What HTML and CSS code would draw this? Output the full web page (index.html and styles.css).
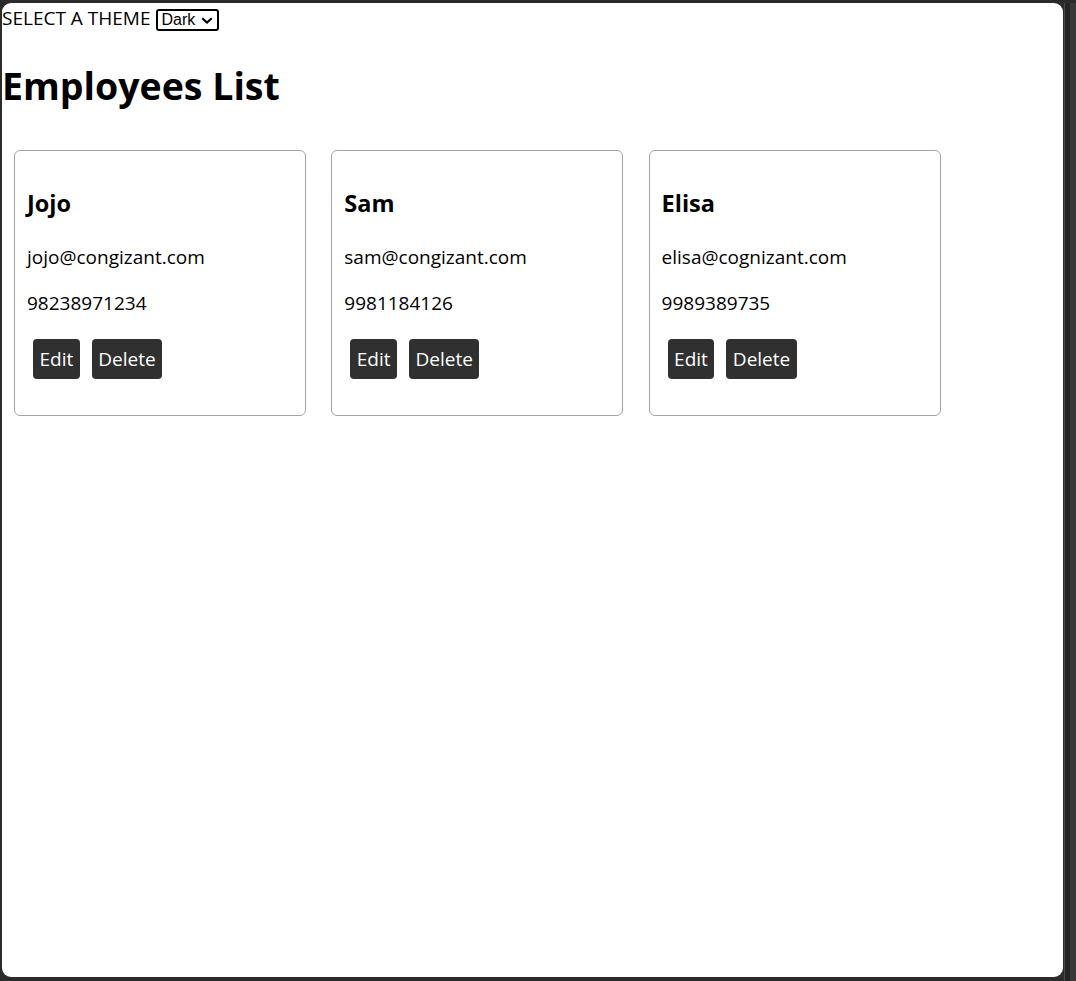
FILE: index.html
```html
<!DOCTYPE html>
<html lang="en">
<head>
<meta charset="utf-8">
<title>Employees List</title>
<link rel="stylesheet" href="styles.css">
</head>
<body>
<div class="desktop">
  <div class="window">
    <div class="theme-bar">
      <label class="theme-label" for="theme">SELECT A THEME</label>
      <span class="select-wrap">
        <select id="theme" class="theme-select">
          <option>Dark</option>
          <option>Light</option>
        </select>
        <svg class="chevron" viewBox="0 0 12 7" width="12" height="7" aria-hidden="true"><path d="M1.2 1.2 L6 5.6 L10.8 1.2" fill="none" stroke="#000" stroke-width="2"/></svg>
      </span>
    </div>
    <h1 class="title">Employees List</h1>
    <div class="cards">
      <div class="card">
        <h3 class="name">Jojo</h3>
        <p class="email">jojo@congizant.com</p>
        <p class="phone">98238971234</p>
        <div class="actions">
          <button class="btn">Edit</button>
          <button class="btn">Delete</button>
        </div>
      </div>
      <div class="card">
        <h3 class="name">Sam</h3>
        <p class="email">sam@congizant.com</p>
        <p class="phone">9981184126</p>
        <div class="actions">
          <button class="btn">Edit</button>
          <button class="btn">Delete</button>
        </div>
      </div>
      <div class="card">
        <h3 class="name">Elisa</h3>
        <p class="email">elisa@cognizant.com</p>
        <p class="phone">9989389735</p>
        <div class="actions">
          <button class="btn">Edit</button>
          <button class="btn">Delete</button>
        </div>
      </div>
    </div>
  </div>
  <div class="side-strip"></div>
</div>
</body>
</html>
```
FILE: styles.css
```css
html, body {
  margin: 0;
  padding: 0;
}
body {
  background: #2b2b2b;
  height: 981px;
  overflow: hidden;
  font-family: "Open Sans", "Noto Sans", sans-serif;
  color: #000;
}
.desktop {
  display: flex;
  align-items: flex-start;
  padding: 3px 0 0 2px;
  height: 981px;
  box-sizing: border-box;
}
.window {
  flex: 0 0 1061px;
  width: 1061px;
  height: 974px;
  background: #fff;
  border-radius: 9px;
  overflow: hidden;
}
.side-strip {
  flex: 0 0 12px;
  margin-left: 1px;
  width: 12px;
  height: 978px;
  background: linear-gradient(to right, #4a4a4a 0, #4a4a4a 1px, #242424 1px, #242424 6px, #383838 6px);
}
.theme-bar {
  display: flex;
  align-items: flex-start;
  height: 29px;
}
.theme-label {
  font-size: 19px;
  line-height: 30px;
}
.select-wrap {
  position: relative;
  display: block;
  margin: 5.5px 0 0 6px;
  width: 63px;
  height: 22px;
}
.theme-select {
  appearance: none;
  -webkit-appearance: none;
  display: block;
  width: 63px;
  height: 22px;
  box-sizing: border-box;
  border: 2px solid #000;
  border-radius: 3px;
  background: #fff;
  color: #000;
  font-family: "Liberation Sans", Arial, sans-serif;
  font-size: 16px;
  line-height: 18px;
  padding: 0 0 0 3px;
  margin: 0;
}
.chevron {
  position: absolute;
  left: 45px;
  top: 8.5px;
  pointer-events: none;
}
.title {
  font-size: 37.5px;
  font-weight: 700;
  line-height: 50px;
  margin: 28.8px 0 39.2px 0;
}
.cards {
  display: flex;
  gap: 25.3px;
  padding-left: 12px;
}
.card {
  width: 292px;
  height: 266px;
  box-sizing: border-box;
  border: 1px solid #a3a3a3;
  border-radius: 6px;
  padding: 0 12px;
}
.name {
  font-size: 23.5px;
  font-weight: 700;
  line-height: 30px;
  margin: 36.9px 0 0 0;
}
.email,
.phone {
  font-size: 19px;
  line-height: 26px;
  margin: 0;
}
.email {
  margin-top: 25.75px;
}
.phone {
  margin-top: 20px;
}
.actions {
  display: flex;
  gap: 12px;
  margin: 23.4px 0 0 6px;
}
.btn {
  height: 40px;
  padding: 0 6.5px;
  border: none;
  border-radius: 4px;
  background: #303030;
  color: #fff;
  font-family: "Open Sans", "Noto Sans", sans-serif;
  font-size: 19px;
  line-height: 40px;
}
```
